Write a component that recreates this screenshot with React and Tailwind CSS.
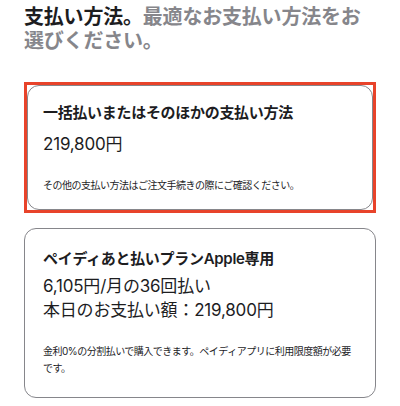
import React from "react";

const font = { fontFamily: 'Inter, "Noto Sans CJK JP", sans-serif' };

const PaymentOption = ({ title, lines, note, selected }) => {
  const card = (
    <div
      className={`rounded-[12px] border border-[#86868b] bg-white ${
        selected ? "px-[15px] pt-[17px] pb-[15px]" : "px-[18px] pt-[20px] pb-[20px]"
      }`}
    >
      <p className="text-[15px] leading-[20px] font-semibold text-[#1d1d1f] tracking-[-0.3px]">
        {title}
      </p>
      <div className={selected ? "mt-[9px]" : "mt-[5px]"}>
        {lines.map((line) => (
          <p
            key={line}
            className="text-[17px] leading-[24px] text-[#1d1d1f] tracking-[-0.2px]"
          >
            {line}
          </p>
        ))}
      </div>
      <p className="mt-[21px] text-[10px] leading-[17px] text-[#1d1d1f] tracking-[-0.5px]">
        {note}
      </p>
    </div>
  );

  if (!selected) return card;
  return <div className="border-[3px] border-[#e8432a]">{card}</div>;
};

export default function App() {
  return (
    <div className="bg-white w-[400px] h-[406px] overflow-hidden px-[24px] pt-[5px]" style={font}>
      <h2 className="text-[20px] leading-[24px] font-bold text-[#86868b] tracking-[-0.2px]">
        <span className="text-[#1d1d1f]">支払い方法。</span>
        最適なお支払い方法をお選びください。
      </h2>

      <div className="mt-[29px] flex flex-col gap-[15px]">
        <PaymentOption
          selected
          title="一括払いまたはそのほかの支払い方法"
          lines={["219,800円"]}
          note="その他の支払い方法はご注文手続きの際にご確認ください。"
        />
        <PaymentOption
          title="ペイディあと払いプランApple専用"
          lines={["6,105円/月の36回払い", "本日のお支払い額：219,800円"]}
          note="金利0%の分割払いで購入できます。ペイディアプリに利用限度額が必要です。"
        />
      </div>
    </div>
  );
}
